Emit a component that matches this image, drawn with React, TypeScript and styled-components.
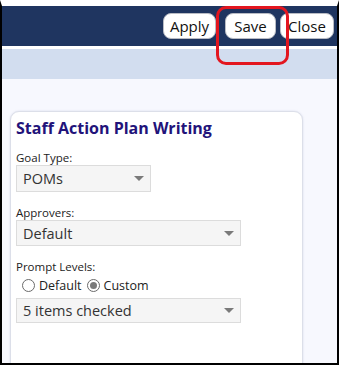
import React from "react";
import styled, { createGlobalStyle } from "styled-components";

const Global = createGlobalStyle`
  html, body { margin: 0; padding: 0; background: #ffffff; }
  * { box-sizing: border-box; }
`;

const Frame = styled.div`
  position: relative;
  width: 339px;
  height: 365px;
  overflow: hidden;
  border-left: 2px solid #000;
  border-right: 2px solid #000;
  border-bottom: 2px solid #000;
  border-top: 6px solid #fff;
  background: #f7f8fe;
  font-family: "Open Sans", "Noto Sans", sans-serif;
  display: flex;
  flex-direction: column;
`;

const Header = styled.div`
  height: 40px;
  flex: none;
  background: #1f3560;
  display: flex;
  align-items: center;
  justify-content: flex-end;
  padding-right: 3px;
`;

const HeadButton = styled.button<{ $ml: number; $w: number }>`
  height: 26px;
  width: ${(p) => p.$w}px;
  margin-left: ${(p) => p.$ml}px;
  padding: 0;
  border: 1px solid #b9bcc4;
  border-radius: 8px;
  background: #ffffff;
  color: #111;
  font-family: "Open Sans", "Noto Sans", sans-serif;
  font-size: 15px;
  line-height: 24px;
  text-align: center;
`;

const SubBar = styled.div`
  height: 33px;
  flex: none;
  border-top: 3px solid #ffffff;
  background: #d2ddef;
`;

const Content = styled.div`
  flex: 1;
  padding: 32px 0 0 8px;
`;

const Card = styled.div`
  width: 293px;
  height: 400px;
  background: #ffffff;
  border: 1px solid #dcdfe9;
  border-radius: 9px;
  box-shadow: 0 0 2px rgba(120, 130, 170, 0.25);
  padding: 6px 5px;
`;

const Title = styled.div`
  font-size: 16px;
  font-weight: 700;
  color: #22137a;
  line-height: 21px;
  margin-bottom: 11px;
`;

const Label = styled.div`
  font-size: 11.5px;
  color: #222;
  line-height: 15px;
`;

const Select = styled.div<{ $w: number; $h: number }>`
  width: ${(p) => p.$w}px;
  height: ${(p) => p.$h}px;
  background: #f5f5f5;
  border: 1px solid #dcdcdc;
  display: flex;
  align-items: center;
  justify-content: space-between;
  padding: 0 6px 0 6px;
  font-size: 14.5px;
  color: #333;
  margin-bottom: 13px;
`;

const Arrow = styled.span`
  width: 0;
  height: 0;
  border-left: 5px solid transparent;
  border-right: 5px solid transparent;
  border-top: 5px solid #7a7a7a;
`;

const RadioRow = styled.div`
  display: flex;
  align-items: center;
  height: 19px;
  padding-left: 6px;
  margin: 2px 0 3px;
  font-size: 12.5px;
  color: #222;
`;

const Radio = styled.span<{ $on?: boolean }>`
  width: 13px;
  height: 13px;
  border-radius: 50%;
  border: 1px solid #6b6b6b;
  background: #fff;
  display: inline-flex;
  align-items: center;
  justify-content: center;
  margin-right: 4px;
  &::after {
    content: "";
    width: 7px;
    height: 7px;
    border-radius: 50%;
    background: ${(p) => (p.$on ? "#7a7a7a" : "transparent")};
  }
`;

const RadioText = styled.span`
  margin-right: 5px;
`;

const Highlight = styled.div`
  position: absolute;
  left: 214px;
  top: 0px;
  width: 73px;
  height: 59px;
  border: 3.5px solid #e3161f;
  border-radius: 10px;
  pointer-events: none;
`;

export default function App() {
  return (
    <>
      <Global />
      <Frame>
        <Header>
          <HeadButton $ml={0} $w={53}>Apply</HeadButton>
          <HeadButton $ml={9} $w={51}>Save</HeadButton>
          <HeadButton $ml={4} $w={54}>Close</HeadButton>
        </Header>
        <SubBar />
        <Content>
          <Card>
            <Title>Staff Action Plan Writing</Title>
            <Label>Goal Type:</Label>
            <Select $w={135} $h={27}>
              <span>POMs</span>
              <Arrow />
            </Select>
            <Label>Approvers:</Label>
            <Select $w={225} $h={26}>
              <span>Default</span>
              <Arrow />
            </Select>
            <Label>Prompt Levels:</Label>
            <RadioRow>
              <Radio />
              <RadioText>Default</RadioText>
              <Radio $on />
              <RadioText>Custom</RadioText>
            </RadioRow>
            <Select $w={225} $h={25}>
              <span>5 items checked</span>
              <Arrow />
            </Select>
          </Card>
        </Content>
        <Highlight />
      </Frame>
    </>
  );
}
